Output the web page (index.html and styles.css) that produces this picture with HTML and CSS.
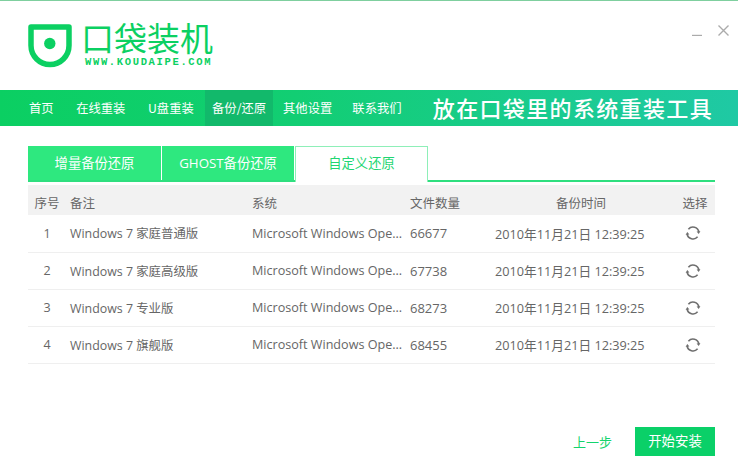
FILE: index.html
```html
<!DOCTYPE html>
<html lang="zh">
<head>
<meta charset="utf-8">
<title>口袋装机</title>
<link rel="stylesheet" href="styles.css">
</head>
<body>
<div class="app">
  <header class="top">
    <div class="brand">
      <svg class="logo" width="44" height="44" viewBox="0 0 44 44" aria-hidden="true">
        <path d="M3 3H41V21.5A19 19 0 0 1 3 21.5Z" fill="none" stroke="#0bd062" stroke-width="5.5" stroke-linejoin="round"/>
        <circle cx="21.8" cy="19.5" r="5.7" fill="#0bd062"/>
      </svg>
      <div class="brand-text">
        <div class="brand-name">口袋装机</div>
        <div class="brand-url">WWW.KOUDAIPE.COM</div>
      </div>
    </div>
    <div class="win-controls">
      <svg width="10" height="10" viewBox="0 0 10 10" class="win-min" aria-hidden="true"><path d="M0 9.5H10" stroke="#ababab" stroke-width="1.4"/></svg>
      <svg width="11" height="11" viewBox="0 0 11 11" aria-hidden="true"><path d="M.5.5L10.5 10.5M10.5.5L.5 10.5" stroke="#ababab" stroke-width="1.4"/></svg>
    </div>
  </header>
  <nav class="nav">
    <ul class="nav-list">
      <li class="nav-item">首页</li>
      <li class="nav-item">在线重装</li>
      <li class="nav-item">U盘重装</li>
      <li class="nav-item active">备份/还原</li>
      <li class="nav-item">其他设置</li>
      <li class="nav-item">联系我们</li>
    </ul>
    <div class="slogan">放在口袋里的系统重装工具</div>
  </nav>
  <main class="content">
    <div class="tabs">
      <div class="tab">增量备份还原</div>
      <div class="tab">GHOST备份还原</div>
      <div class="tab current">自定义还原</div>
    </div>
    <table class="grid">
      <colgroup>
        <col class="c-no"><col class="c-note"><col class="c-sys"><col class="c-count"><col class="c-time"><col class="c-pick">
      </colgroup>
      <thead>
        <tr><th class="center">序号</th><th>备注</th><th>系统</th><th>文件数量</th><th class="center">备份时间</th><th class="center pick-head">选择</th></tr>
      </thead>
      <tbody>
        <tr><td class="center">1</td><td class="name">Windows 7 家庭普通版</td><td class="sys">Microsoft Windows Ope...</td><td class="count">66677</td><td class="time">2010年11月21日 12:39:25</td><td class="center"><svg class="refresh" width="16" height="16" viewBox="0 0 16 16" aria-hidden="true"><use href="#ic"/></svg></td></tr>
        <tr><td class="center">2</td><td class="name">Windows 7 家庭高级版</td><td class="sys">Microsoft Windows Ope...</td><td class="count">67738</td><td class="time">2010年11月21日 12:39:25</td><td class="center"><svg class="refresh" width="16" height="16" viewBox="0 0 16 16" aria-hidden="true"><use href="#ic"/></svg></td></tr>
        <tr><td class="center">3</td><td class="name">Windows 7 专业版</td><td class="sys">Microsoft Windows Ope...</td><td class="count">68273</td><td class="time">2010年11月21日 12:39:25</td><td class="center"><svg class="refresh" width="16" height="16" viewBox="0 0 16 16" aria-hidden="true"><use href="#ic"/></svg></td></tr>
        <tr><td class="center">4</td><td class="name">Windows 7 旗舰版</td><td class="sys">Microsoft Windows Ope...</td><td class="count">68455</td><td class="time">2010年11月21日 12:39:25</td><td class="center"><svg class="refresh" width="16" height="16" viewBox="0 0 16 16" aria-hidden="true"><use href="#ic"/></svg></td></tr>
      </tbody>
    </table>
    <div class="actions">
      <span class="prev">上一步</span>
      <span class="start">开始安装</span>
    </div>
  </main>
</div>
<svg width="0" height="0" class="defs" aria-hidden="true">
  <defs>
    <g id="ic" fill="none" stroke="#6f6f6f" stroke-width="1.6">
      <path d="M3.4 4.2A6 6 0 0 1 13.9 7"/>
      <path d="M12.6 11.8A6 6 0 0 1 2.1 9"/>
      <path d="M15.4 6.2L13.7 9 11.6 6.6Z" fill="#6f6f6f" stroke="none"/>
      <path d="M.6 9.8L2.3 7 4.4 9.4Z" fill="#6f6f6f" stroke="none"/>
    </g>
  </defs>
</svg>
</body>
</html>
```
FILE: styles.css
```css
* { box-sizing: border-box; }
html, body { margin: 0; padding: 0; background: #fff; }
body {
  width: 738px;
  height: 476px;
  overflow: hidden;
  font-family: "Open Sans", "Noto Sans CJK SC", sans-serif;
  color: #666;
}
.app { width: 738px; height: 476px; border-top: 1px solid #7fcf9f; }

.top {
  height: 89px;
  display: flex;
  justify-content: space-between;
  align-items: flex-start;
  padding: 22px 9px 0 28px;
}
.brand { display: flex; gap: 9px; }
.logo { margin-top: 1px; }
.brand-text { display: flex; flex-direction: column; }
.brand-name {
  font-family: "Noto Sans CJK SC", sans-serif;
  font-size: 33px;
  line-height: 33px;
  font-weight: 400;
  margin-top: -2px;
  color: #0bd062;
}
.brand-url {
  font-family: "Liberation Mono", monospace;
  font-weight: 700;
  font-size: 10.5px;
  line-height: 10px;
  margin: 3px 0 0 4px;
  letter-spacing: 1.65px;
  color: #0bd062;
}
.win-controls { display: flex; gap: 16px; padding-top: 2px; }
.win-min { margin-top: 1px; }

.nav {
  height: 36px;
  display: flex;
  justify-content: space-between;
  align-items: stretch;
  padding-right: 25px;
  background: linear-gradient(90deg, #0bcf62 0%, #12ce73 40%, #1fc9a4 100%);
  color: #fff;
}
.nav-list { list-style: none; margin: 0; padding: 0 0 0 17.7px; display: flex; }
.nav-item {
  display: flex;
  align-items: center;
  padding: 0 11.3px;
  font-family: "Noto Sans CJK SC", sans-serif;
  font-size: 12.3px;
}
.nav-item.active { background: #12b96b; padding: 0 7px; margin-right: -1.3px; }
.nav-item:last-child { margin-left: -2.5px; }
.slogan {
  font-family: "Noto Sans CJK SC", sans-serif;
  font-size: 22px;
  line-height: 34px;
  letter-spacing: 1.35px;
  font-weight: 500;
}

.content { padding: 20px 23px 0 28px; }
.tabs {
  display: flex;
  height: 36px;
  border-bottom: 2px solid #2fdf7f;
  gap: 1px;
}
.tab {
  width: 133px;
  height: 34px;
  background: #2ee87f;
  color: #fff;
  font-size: 13.3px;
  line-height: 34px;
  text-align: center;
}
.tab + .tab { width: 132px; }
.tab.current {
  width: 133px;
  height: 36px;
  background: #fff;
  color: #1fd672;
  border: 1px solid #8eefb8;
  border-bottom: 0;
  line-height: 33px;
}

.grid {
  width: 687px;
  margin-top: 3px;
  table-layout: fixed;
  border-collapse: collapse;
  font-size: 12.5px;
}
.c-no { width: 42px; }
.c-note { width: 182px; }
.c-sys { width: 158px; }
.c-count { width: 85px; }
.c-time { width: 172px; }
.c-pick { width: 48px; }
.grid th {
  height: 30px;
  padding: 4px 0 0;
  background: #f2f2f2;
  font-weight: 400;
  text-align: left;
  font-size: 12.5px;
}
.grid td {
  height: 37px;
  padding: 0;
  border-bottom: 1px solid #efefef;
  white-space: nowrap;
}
.grid td.name { font-size: 12.4px; }
.grid td.sys { font-size: 12.6px; }
.grid td.count { font-size: 13px; }
.grid td.time { font-size: 12.7px; }
.grid th.center { text-align: center; }
.grid td.center { text-align: center; }
.grid th:first-child, .grid td:first-child { padding-right: 4px; }
.grid th.pick-head { padding-left: 8px; }
.refresh { display: inline-block; vertical-align: middle; margin: -2px 0 0 4px; }

.actions {
  display: flex;
  justify-content: flex-end;
  align-items: center;
  gap: 23px;
  margin-top: 63px;
}
.prev { font-size: 13px; color: #14d46c; }
.start {
  width: 80px;
  height: 29px;
  background: #0ad068;
  color: #fff;
  font-size: 13.4px;
  line-height: 29px;
  text-align: center;
}
.defs { position: absolute; }
```
